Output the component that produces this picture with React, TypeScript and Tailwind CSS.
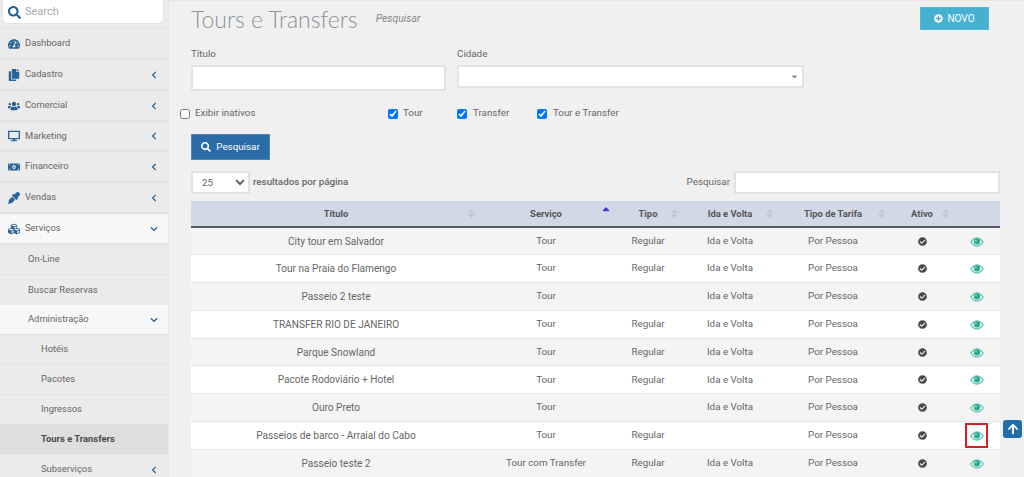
import React from 'react';
import { FaArrowUp, FaCaretDown, FaCheckCircle, FaChevronDown, FaChevronLeft, FaCopy, FaCubes, FaDesktop, FaEyeDropper, FaMoneyBillAlt, FaPlusCircle, FaSearch, FaSort, FaSortUp, FaTachometerAlt, FaUsers } from 'react-icons/fa';

const menu = [
    { label: 'Dashboard', icon: FaTachometerAlt, arrow: false, height: 'h-[31px]' },
    { label: 'Cadastro', icon: FaCopy, arrow: true, height: 'h-[31px]' },
    { label: 'Comercial', icon: FaUsers, arrow: true, height: 'h-[31px]' },
    { label: 'Marketing', icon: FaDesktop, arrow: true, height: 'h-[30px]' },
    { label: 'Financeiro', icon: FaMoneyBillAlt, arrow: true, height: 'h-[31px]' },
    { label: 'Vendas', icon: FaEyeDropper, arrow: true, height: 'h-[31px]' },
];

const rows = [
    ['City tour em Salvador', 'Tour', 'Regular', 'Ida e Volta'],
    ['Tour na Praia do Flamengo', 'Tour', 'Regular', 'Ida e Volta'],
    ['Passeio 2 teste', 'Tour', '', 'Ida e Volta'],
    ['TRANSFER RIO DE JANEIRO', 'Tour', 'Regular', 'Ida e Volta'],
    ['Parque Snowland', 'Tour', 'Regular', 'Ida e Volta'],
    ['Pacote Rodoviário + Hotel', 'Tour', 'Regular', 'Ida e Volta'],
    ['Ouro Preto', 'Tour', '', 'Ida e Volta'],
    ['Passeios de barco - Arraial do Cabo', 'Tour', 'Regular', ''],
    ['Passeio teste 2', 'Tour com Transfer', 'Regular', 'Ida e Volta'],
];

function Eye() {
    return (
        <svg viewBox="0 0 16 11" className="h-[10px] w-[14px]">
            <path d="M0 5.5C3 1.5 5.5 0 8 0s5 1.5 8 5.5C13 9.5 10.5 11 8 11S3 9.5 0 5.5z" fill="#6cc9b9" />
            <path d="M1.800 5.500C4 3 6 2 8 2s4 1 6.200 3.500C12 8 10 9.200 8 9.200S4 8 1.800 5.500z" fill="#dff5f1" />
            <circle cx="8" cy="5" r="3.400" fill="#2aa58f" />
            <circle cx="6.800" cy="3.900" r="0.900" fill="#c9efe8" />
        </svg>
    )
}

function SubItem({ label, active, arrow }: { label: string, active?: boolean, arrow?: boolean }) {
    return (
        <div className={`flex h-[30px] shrink-0 items-center justify-between border-b border-[#e2e2e2] pl-[41px] pr-[10px] ${active ? 'bg-[#dedede] font-bold text-[#4a4a4a]' : 'text-[#666]'}`}>
            <span>{label}</span>
            {arrow && <FaChevronLeft className="text-[8px] text-[#1f5f94]" />}
        </div>
    )
}

function Head({ label, right, sorted }: { label: string, right: string, sorted?: boolean }) {
    return (
        <th className="relative pt-[1px] font-bold">
            {label}
            {sorted
                ? <FaSortUp className={`absolute top-[5px] text-[12px] text-[#3b3bdc] ${right}`} />
                : <FaSort className={`absolute top-[7px] text-[11px] text-[#c0c5ce] ${right}`} />}
        </th>
    )
}

export default function App() {
    return (
        <div className="relative flex h-[477px] w-[1024px] overflow-hidden bg-[#f0f0f0] font-['Roboto',sans-serif] text-[9.800px] text-[#666]">
            <aside className="flex w-[169px] shrink-0 flex-col border-r border-[#e6e6e6] bg-[#ebebeb] text-[9.400px]">
                <div className="flex h-[29px] shrink-0 items-start border-b border-[#e2e2e2] px-[2px]">
                    <div className="flex h-[24px] w-[162px] items-center gap-[4px] rounded-b-[6px] border border-t-0 border-[#e4e4e4] bg-white pl-[5px] pt-[1px]">
                        <FaSearch className="text-[13px] text-[#1f5f94]" />
                        <span className="text-[11px] text-[#a8a8a8]">Search</span>
                    </div>
                </div>
                {menu.map(({ label, icon: Icon, arrow, height }) => (
                    <div key={label} className={`flex shrink-0 items-center border-b-2 border-[#e2e2e2] pl-[8px] pr-[10px] ${height}`}>
                        <Icon className="h-[12px] w-[12px] text-[#2a6496]" />
                        <span className="ml-[5px] flex-1">{label}</span>
                        {arrow && <FaChevronLeft className="text-[8px] text-[#1f5f94]" />}
                    </div>
                ))}
                <div className="flex h-[31px] shrink-0 items-center border-b-2 border-[#e2e2e2] bg-[#f7f7f7] pl-[8px] pr-[10px]">
                    <FaCubes className="h-[12px] w-[12px] text-[#2a6496]" />
                    <span className="ml-[5px] flex-1">Serviços</span>
                    <FaChevronDown className="text-[8px] text-[#1f5f94]" />
                </div>
                <div className="flex h-[30px] shrink-0 items-center border-b border-[#e2e2e2] pl-[28px]">On-Line</div>
                <div className="flex h-[30px] shrink-0 items-center pl-[28px]">Buscar Reservas</div>
                <div className="flex h-[30px] shrink-0 items-center justify-between border-b border-[#e2e2e2] bg-[#f7f7f7] pl-[28px] pr-[10px]">
                    <span>Administração</span>
                    <FaChevronDown className="text-[8px] text-[#1f5f94]" />
                </div>
                <SubItem label="Hotéis" />
                <SubItem label="Pacotes" />
                <SubItem label="Ingressos" />
                <SubItem label="Tours e Transfers" active />
                <SubItem label="Subserviços" arrow />
            </aside>

            <main className="flex-1 border-t border-[#e6e6e6] pl-[22px] pr-[25px]">
                <div className="flex h-[47px] items-start justify-between">
                    <div className="flex items-start">
                        <h1 className="mt-[1px] font-['Lato',sans-serif] text-[23px] font-light leading-[34px] text-[#8a9099]">Tours e Transfers</h1>
                        <span className="ml-[18px] mt-[10px] text-[10.400px] italic text-[#888]">Pesquisar</span>
                    </div>
                    <button className="mr-[11px] mt-[6px] flex h-[23px] w-[69px] items-center justify-center gap-[4px] border border-[#5bb8d4] bg-[#46b0d0] text-[10px] text-white">
                        <FaPlusCircle className="text-[9px]" /> NOVO
                    </button>
                </div>

                <div className="flex gap-[11px]">
                    <div>
                        <label className="block leading-[12px]">Título</label>
                        <div className="mt-[5px] h-[26px] w-[255px] border-2 border-[#e2e2e2] bg-white" />
                    </div>
                    <div>
                        <label className="block leading-[12px]">Cidade</label>
                        <div className="mt-[5px] flex h-[23px] w-[347px] items-center justify-end border-2 border-[#e2e2e2] bg-white pr-[3px]">
                            <FaCaretDown className="text-[9px] text-[#888]" />
                        </div>
                    </div>
                </div>

                <div className="mt-[15px] flex h-[16px] items-start">
                    <label className="-ml-[11px] flex w-[208px] items-start">
                        <input type="checkbox" className="mt-[3px] h-[10px] w-[10px]" />
                        <span className="ml-[5px]">Exibir inativos</span>
                    </label>
                    <label className="flex w-[69px] items-start">
                        <input type="checkbox" defaultChecked className="mt-[3px] h-[10px] w-[10px]" />
                        <span className="ml-[5px]">Tour</span>
                    </label>
                    <label className="flex w-[80px] items-start">
                        <input type="checkbox" defaultChecked className="mt-[3px] h-[10px] w-[10px]" />
                        <span className="ml-[6px]">Transfer</span>
                    </label>
                    <label className="flex items-start">
                        <input type="checkbox" defaultChecked className="mt-[3px] h-[10px] w-[10px]" />
                        <span className="ml-[6px]">Tour e Transfer</span>
                    </label>
                </div>

                <button className="mt-[12px] flex h-[26px] w-[79px] items-center justify-center gap-[5px] border border-[#4f86b5] bg-[#2a6ca8] text-white">
                    <FaSearch className="text-[10px]" /> Pesquisar
                </button>

                <div className="mt-[11px] flex h-[23px] items-center justify-between">
                    <div className="flex items-center gap-[3px]">
                        <select className="h-[23px] w-[59px] border-2 border-[#e2e2e2] bg-white pl-[5px]">
                            <option>25</option>
                        </select>
                        <span className="font-medium">resultados por página</span>
                    </div>
                    <div className="flex items-center gap-[4px]">
                        <span>Pesquisar</span>
                        <div className="h-[23px] w-[266px] border-2 border-[#e2e2e2] bg-white" />
                    </div>
                </div>

                <table className="mt-[7px] w-[809px] table-fixed border-collapse text-center">
                    <colgroup>
                        <col className="w-[290px]" />
                        <col className="w-[130px]" />
                        <col className="w-[74px]" />
                        <col className="w-[90px]" />
                        <col className="w-[116px]" />
                        <col className="w-[62px]" />
                        <col className="w-[47px]" />
                    </colgroup>
                    <thead>
                        <tr className="h-[26px] border-b-2 border-[#555c66] bg-[#d2d9e6] text-[9.400px] text-[#555]">
                            <Head label="Título" right="right-[4px]" />
                            <Head label="Serviço" right="right-[-1px]" sorted />
                            <Head label="Tipo" right="right-[5px]" />
                            <Head label="Ida e Volta" right="right-[0px]" />
                            <Head label="Tipo de Tarifa" right="right-[4px]" />
                            <Head label="Ativo" right="right-[2px]" />
                            <th />
                        </tr>
                    </thead>
                    <tbody>
                        {rows.map((row, i) => (
                            <tr key={row[0]} className={`h-[27.800px] border-b border-[#e6e6e6] ${i % 2 === 0 ? 'bg-[#f4f4f4]' : 'bg-white'}`}>
                                {row.map((cell, c) => <td key={c} className={c === 0 ? 'text-[10.100px]' : ''}>{cell}</td>)}
                                <td>Por Pessoa</td>
                                <td><FaCheckCircle className="mx-auto text-[9px] text-[#4a4a4a]" /></td>
                                <td>
                                    {i === 7
                                        ? <span className="mx-auto mt-[1px] flex h-[25px] w-[23px] items-center justify-center border-2 border-[#e01b24]"><Eye /></span>
                                        : <span className="mt-[1px] flex justify-center"><Eye /></span>}
                                </td>
                            </tr>
                        ))}
                    </tbody>
                </table>
            </main>

            <button className="absolute left-[1003px] top-[420px] flex h-[18px] w-[19px] items-center justify-center rounded-[3px] bg-[#1f6ea8] text-[12px] text-white">
                <FaArrowUp />
            </button>
        </div>
    )
}
